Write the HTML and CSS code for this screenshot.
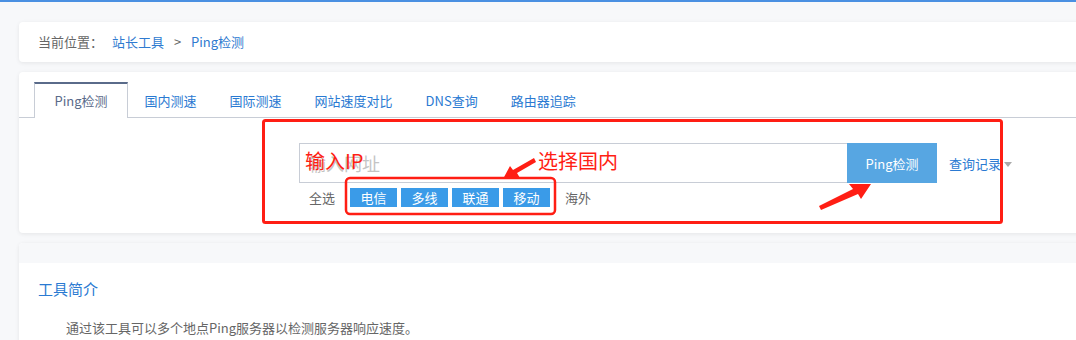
FILE: index.html
```html
<!DOCTYPE html>
<html lang="zh-CN">
<head>
    <meta charset="UTF-8">
    <meta name="viewport" content="width=device-width, initial-scale=1.0">
    <title>Ping检测</title>
    <link rel="stylesheet" href="styles.css">
</head>
<body>
    <div class="wrap">
        <div class="card crumb">
            <span class="crumb-label">当前位置：</span>
            <a class="crumb-link">站长工具</a>
            <span class="crumb-sep">&gt;</span>
            <a class="crumb-link">Ping检测</a>
        </div>

        <div class="card tool">
            <div class="tabs">
                <div class="tab active">Ping检测</div>
                <div class="tab">国内测速</div>
                <div class="tab">国际测速</div>
                <div class="tab">网站速度对比</div>
                <div class="tab">DNS查询</div>
                <div class="tab">路由器追踪</div>
            </div>

            <div class="form">
                <div class="search">
                    <input type="text" class="host" placeholder="输入网址">
                    <button class="go">Ping检测</button>
                    <a class="history">查询记录<span class="caret"></span></a>
                </div>
                <div class="lines">
                    <span class="opt">全选</span>
                    <span class="tag">电信</span>
                    <span class="tag">多线</span>
                    <span class="tag">联通</span>
                    <span class="tag">移动</span>
                    <span class="opt abroad">海外</span>
                </div>
            </div>
        </div>

        <div class="card intro">
            <div class="intro-head"></div>
            <h3>工具简介</h3>
            <p>通过该工具可以多个地点Ping服务器以检测服务器响应速度。</p>
        </div>
    </div>

    <!-- screenshot annotations -->
    <svg class="marks" width="1076" height="340" viewBox="0 0 1076 340">
        <rect x="263.5" y="120.5" width="738" height="102" rx="2" fill="none" stroke="#ff1e14" stroke-width="3"/>
        <rect x="346" y="178" width="209" height="36" rx="4" fill="none" stroke="#ff1e14" stroke-width="2.5"/>
        <polygon points="534,158 536,162 517,173 520,178 503,179 510,166 513,170" fill="#ff1e14"/>
        <polygon points="821,210 819,206 853,189 849,184 871,184 861,199 858,194" fill="#ff1e14"/>
    </svg>
    <span class="note note-ip">输入IP</span>
    <span class="note note-area">选择国内</span>
</body>
</html>
```

FILE: styles.css
```css
body { margin: 0; background: #f7f8fa; border-top: 2px solid #4a90e2; overflow: hidden; font-family: "Noto Sans CJK SC", "Noto Sans", sans-serif; font-size: 13px; color: #666; }
a { cursor: pointer; }

.wrap { width: 1100px; padding: 20px 0 0 19px; }
.card { background: #fff; border-radius: 4px; box-shadow: 0 1px 4px rgba(0, 0, 0, 0.08); }

.crumb { height: 40px; line-height: 40px; padding-left: 19px; }
.crumb-label { margin-right: 6px; }
.crumb-link { color: #2f7bd0; }
.crumb-sep { margin: 0 7px 0 7px; color: #666; }

.tool { margin-top: 10px; padding-top: 10px; }
.tabs { display: flex; height: 35px; padding-left: 15px; border-bottom: 1px solid #c8cdd6; }
.tab { padding: 0 16.5px; line-height: 37px; color: #2a7ad2; cursor: pointer; }
.tab.active { width: 58px; padding: 0 17px; line-height: 33px; color: #5a6b8a; background: #fff; border: 1px solid #c8cdd6; border-top: 2px solid #5a6b8a; border-bottom: none; margin-bottom: -1px; text-align: center; }

.form { padding: 25px 0 26px 280px; }
.search { display: flex; align-items: center; }
.host { width: 548px; height: 40px; box-sizing: border-box; border: 1px solid #c8cdd6; border-right: none; padding: 0 8px; font-family: "Noto Sans CJK SC", "Noto Sans", sans-serif; font-size: 18px; color: #333; outline: none; }
.host::placeholder { color: #c4c4c4; }
.go { width: 90px; height: 40px; border: none; background: #57a6e2; color: #fff; font-family: "Noto Sans CJK SC", "Noto Sans", sans-serif; font-size: 13px; cursor: pointer; }
.history { margin-left: 12px; color: #2a7ad2; }
.caret { display: inline-block; margin-left: 3px; vertical-align: middle; border-left: 4px solid transparent; border-right: 4px solid transparent; border-top: 5px solid #aaa; }

.lines { display: flex; align-items: center; margin-top: 4px; padding-left: 10px; height: 20px; }
.opt { margin-right: 15px; }
.abroad { margin-left: 11px; }
.tag { height: 19px; line-height: 19px; padding: 0 10.5px; margin-right: 4px; background: #3a9be8; color: #fff; }

.intro { margin-top: 10px; height: 120px; overflow: hidden; }
.intro-head { height: 20px; background: #f7f8fa; }
.intro h3 { margin: 0; padding: 14px 0 0 19px; font-size: 15px; font-weight: normal; color: #2a7ad2; line-height: 24px; }
.intro p { margin: 0; padding: 17px 0 0 47px; line-height: 20px; }

.marks { position: absolute; left: 0; top: 0; pointer-events: none; }
.note { position: absolute; font-size: 20px; line-height: 24px; color: #ff1e14; pointer-events: none; }
.note-ip { left: 305px; top: 149px; }
.note-area { left: 538px; top: 149px; }
```
